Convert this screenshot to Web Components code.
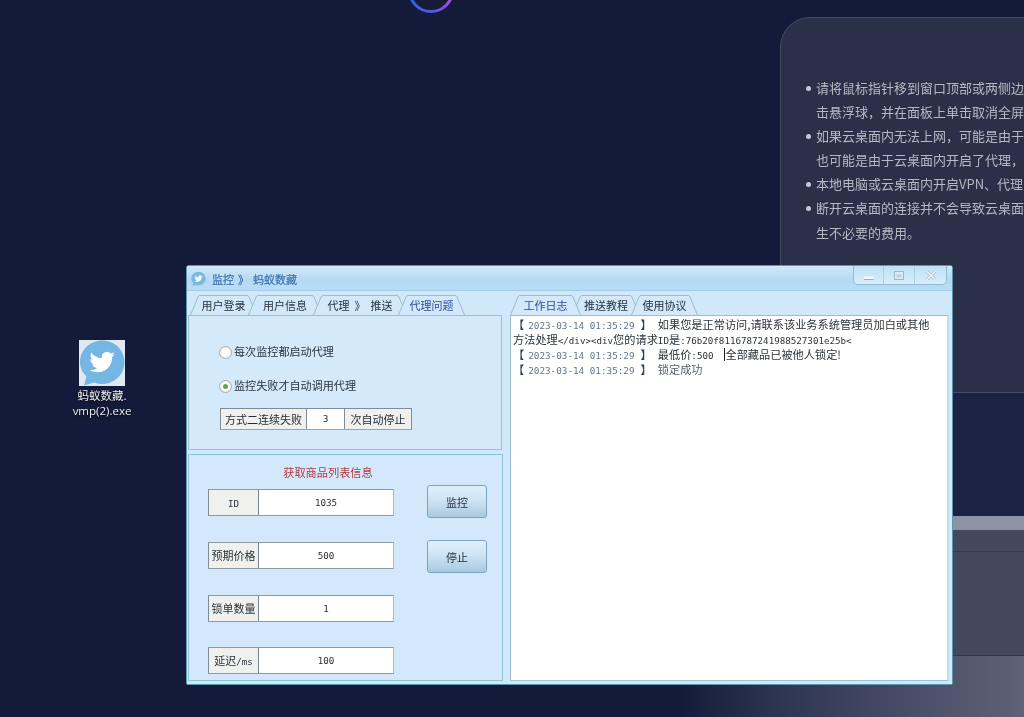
<!DOCTYPE html>
<html lang="zh">
<head>
<meta charset="utf-8">
<title>监控</title>
<style>
  html, body { margin: 0; padding: 0; background: #141b3a; overflow: hidden; }
  body { font-family: "Noto Sans CJK SC", "Liberation Sans", sans-serif; }
</style>
</head>
<body>

<desk-scene>
  <notice-panel slot="backdrop"></notice-panel>
  <desktop-icon slot="icons"></desktop-icon>
  <app-window slot="window">
    <div slot="left-tabs">
      <tab-item w="67">用户登录</tab-item>
      <tab-item w="74">用户信息</tab-item>
      <tab-item w="94">代理&nbsp;&nbsp;》&nbsp;&nbsp;推送</tab-item>
      <tab-item w="67" active>代理问题</tab-item>
    </div>
    <proxy-panel slot="proxy"></proxy-panel>
    <goods-panel slot="goods"></goods-panel>
    <div slot="right-tabs">
      <tab-item w="71" active>工作日志</tab-item>
      <tab-item w="68">推送教程</tab-item>
      <tab-item w="67">使用协议</tab-item>
    </div>
    <log-box slot="log">
      <log-line time="2023-03-14 01:35:29">如果您是正常访问,请联系该业务系统管理员加白或其他</log-line>
      <log-line>方法处理<half-text>&lt;/div&gt;&lt;div</half-text>您的请求<half-text>ID</half-text>是<half-text>:76b20f8116787241988527301e25b&lt;</half-text></log-line>
      <log-line time="2023-03-14 01:35:29">最低价<half-text>:500</half-text><text-caret></text-caret>全部藏品已被他人锁定!</log-line>
      <log-line time="2023-03-14 01:35:29" dim>锁定成功</log-line>
    </log-box>
  </app-window>
</desk-scene>

<script>
// bird used by the desktop icon and the title bar
const BIRD = 'M23.953 4.57a10 10 0 01-2.825.775 4.958 4.958 0 002.163-2.723c-.951.555-2.005.959-3.127 1.184a4.92 4.92 0 00-8.384 4.482C7.69 8.095 4.067 6.13 1.64 3.162a4.822 4.822 0 00-.666 2.475c0 1.71.87 3.213 2.188 4.096a4.904 4.904 0 01-2.228-.616v.06a4.923 4.923 0 003.946 4.827 4.996 4.996 0 01-2.212.085 4.936 4.936 0 004.604 3.417 9.867 9.867 0 01-6.102 2.105c-.39 0-.779-.023-1.17-.067a13.995 13.995 0 007.557 2.209c9.053 0 13.998-7.496 13.998-13.985 0-.21 0-.42-.015-.63A9.935 9.935 0 0024 4.59z';
const MONO = '"DejaVu Sans Mono", "Liberation Mono", monospace';

function shadow(el, html) {
  el.attachShadow({ mode: "open" }).innerHTML = html;
}

class DeskScene extends HTMLElement {
  constructor() {
    super();
    shadow(this, `<style>
      :host { display: block; position: relative; width: 1024px; height: 717px; overflow: hidden;
        background: #141b3a; filter: blur(0.4px); }
      .dark { position: absolute; left: 780px; right: 0; top: 380px; height: 136px; background: #1a2344; }
      .base { position: absolute; left: 640px; right: 0; top: 516px; bottom: 0;
        background: linear-gradient(90deg, #141b3a 0, #141b3a 40px, #2c3350 130px, #474b66 260px, #5f6276 384px); }
      .band { position: absolute; left: 780px; right: 0; top: 516px; height: 14px; background: #8e92a5; }
      .deck { position: absolute; left: 780px; right: 0; top: 530px; height: 125px; background: #43485f;
        border-bottom: 1px solid #33374c; }
      .deck::before { content: ""; position: absolute; left: 0; right: 0; top: 21px; height: 1px; background: #363a50; }
      .ring { position: absolute; left: 405px; top: -36px; }
    </style>
    <div class="dark"></div>
    <div class="base"></div>
    <div class="band"></div>
    <div class="deck"></div>
    <svg class="ring" width="52" height="52" viewBox="0 0 52 52">
      <defs><linearGradient id="g" x1="0" x2="1" y1="0" y2="0">
        <stop offset="0" stop-color="#2f63e6"/><stop offset=".55" stop-color="#5a52e0"/><stop offset="1" stop-color="#a552e4"/>
      </linearGradient></defs>
      <circle cx="26" cy="26" r="21.5" fill="#161b36" stroke="url(#g)" stroke-width="3"/>
    </svg>
    <slot name="backdrop"></slot>
    <slot name="icons"></slot>
    <slot name="window"></slot>`);
  }
}

class NoticePanel extends HTMLElement {
  constructor() {
    super();
    const lines = [
      [1, "请将鼠标指针移到窗口顶部或两侧边"],
      [0, "击悬浮球，并在面板上单击取消全屏"],
      [1, "如果云桌面内无法上网，可能是由于"],
      [0, "也可能是由于云桌面内开启了代理，"],
      [1, "本地电脑或云桌面内开启VPN、代理"],
      [1, "断开云桌面的连接并不会导致云桌面"],
      [0, "生不必要的费用。"]
    ];
    shadow(this, `<style>
      :host { display: block; position: absolute; left: 780px; top: 17px; width: 300px; height: 376px;
        box-sizing: border-box; background: #2a3048; border: 1px solid #454b64; border-radius: 30px;
        padding: 58px 0 0 35px; color: #b6b9c5; font-size: 13px; line-height: 24.100px; overflow: hidden;
        font-family: "Noto Sans CJK SC", "Liberation Sans", sans-serif; }
      div { white-space: nowrap; position: relative; }
      i { position: absolute; left: -10px; top: 10px; width: 5px; height: 5px; border-radius: 50%; background: #c6c9d2; }
    </style>` + lines.map(l => `<div>${l[0] ? "<i></i>" : ""}${l[1]}</div>`).join(""));
  }
}

class DesktopIcon extends HTMLElement {
  constructor() {
    super();
    shadow(this, `<style>
      :host { display: flex; flex-direction: column; align-items: center; position: absolute; left: 66px; top: 340px;
        width: 72px; color: #eef0f4; font-size: 11.500px; line-height: 16px; text-align: center;
        font-family: "Noto Sans CJK SC", "Liberation Sans", sans-serif; text-shadow: 0 1px 2px #000; }
      .tile { width: 46px; height: 46px; background: #dfe9f0; margin-bottom: 1px; }
      .file { font: 11.500px/16px "Open Sans", "Liberation Sans", sans-serif; }
    </style>
    <svg class="tile" viewBox="0 0 46 46">
      <path fill="#76b6e4" d="M23.500 .5C35.500 .5 45.500 10 45.500 22c0 12-10 22-22 22-3 0-5.500-.5-8-1.500L5 45.500l2.500-9C3 32 1 27.500 1 22 1 10 11 .5 23.500 .5z"/>
      <g transform="translate(10.500 9.500) scale(1.050)"><path fill="#fff" d="${BIRD}"/></g>
    </svg>
    <div>蚂蚁数藏.</div>
    <div class="file">vmp(2).exe</div>`);
  }
}

class AppWindow extends HTMLElement {
  constructor() {
    super();
    shadow(this, `<style>
      :host { display: flex; flex-direction: column; position: absolute; left: 186px; top: 265px; width: 767px; height: 420px;
        box-sizing: border-box; border: 1px solid #5b97ad; border-radius: 3px 3px 2px 2px;
        background: #cbe6f8; color: #23303c; font-size: 11px;
        font-family: "Noto Sans CJK SC", "Liberation Sans", sans-serif; }
      .title { flex: none; height: 25px; display: flex; align-items: flex-start; box-sizing: border-box;
        background: linear-gradient(180deg, #cfe8f8 0, #b4daf4 60%, #b9dcf5 100%); border-bottom: 1px solid #a6cbe3; padding-left: 4px; }
      .bird { width: 15px; height: 15px; margin-top: 5px; }
      .title span { margin: 4px 0 0 6px; line-height: 18px; color: #3f74b2; white-space: pre; font-size: 11px;
        -webkit-text-stroke: .25px #3f74b2; text-shadow: 0 0 3px #e3f2fc; }
      .title span i { font-style: normal; margin: 0 4px; }
      .ctl { margin-left: auto; margin-right: 5px; display: flex; height: 19px; box-sizing: border-box;
        border: 1px solid #8fbbd3; border-top: 0; border-radius: 0 0 5px 5px;
        background: linear-gradient(180deg, #bfe0f4, #d8eefb); }
      .ctl b { display: flex; align-items: center; justify-content: center; width: 29px; border-right: 1px solid #a9cfe3; }
      .ctl b:nth-child(2) { width: 30px; }
      .ctl b:last-child { width: 31px; border-right: 0; }
      .main { flex: 1; min-height: 0; display: flex; padding: 4px 3px 3px 1px; gap: 7px; background: #cfe8fa; }
      .left { width: 315px; flex: none; display: flex; flex-direction: column; }
      .right { flex: 1; min-width: 0; display: flex; flex-direction: column; }
      ::slotted([slot="left-tabs"]) { display: flex; height: 20px; padding-left: 2px; flex: none; }
      ::slotted([slot="right-tabs"]) { display: flex; height: 20px; flex: none; }
      ::slotted([slot="goods"]) { flex: 1; margin-top: 4px; }
      ::slotted([slot="log"]) { flex: 1; min-height: 0; }
    </style>
    <div class="title">
      <svg class="bird" viewBox="0 0 24 24">
        <path fill="#7cb9e0" d="M12 1c6.500 0 11.500 4.800 11.500 11 0 6-5 11-11.500 11-1.500 0-3-.3-4.300-.8L2.500 24l1-5C1.500 17 .5 14.700.5 12 .5 5.800 5.500 1 12 1z"/>
        <g transform="translate(5.500 5.800) scale(.54)"><path fill="#fff" d="${BIRD}"/></g>
      </svg>
      <span>监控<i>》</i>蚂蚁数藏</span>
      <div class="ctl">
        <b><svg width="12" height="10"><path d="M1 8h10" stroke="#f2f8fc" stroke-width="3"/><path d="M1 9.500h10" stroke="#8fb2c8"/></svg></b>
        <b><svg width="12" height="11"><rect x="1.500" y="1.500" width="9" height="8" fill="#dcecf6" stroke="#9cb8ca"/><rect x="3.500" y="4" width="5" height="3.500" fill="#bcd6e6"/></svg></b>
        <b><svg width="12" height="11"><path d="M2 1.500l8 8M10 1.500l-8 8" stroke="#a3bccb" stroke-width="3"/><path d="M2 1.500l8 8M10 1.500l-8 8" stroke="#f4f9fc" stroke-width="1.500"/></svg></b>
      </div>
    </div>
    <div class="main">
      <div class="left">
        <slot name="left-tabs"></slot>
        <slot name="proxy"></slot>
        <slot name="goods"></slot>
      </div>
      <div class="right">
        <slot name="right-tabs"></slot>
        <slot name="log"></slot>
      </div>
    </div>`);
  }
}

class TabItem extends HTMLElement {
  constructor() {
    super();
    const w = Number(this.getAttribute("w"));
    const active = this.hasAttribute("active");
    shadow(this, `<style>
      :host { display: flex; align-items: center; justify-content: center; position: relative; height: 20px; flex: none;
        width: ${w}px; margin-left: -9px; white-space: nowrap; font-size: 11px; line-height: 20px;
        color: ${active ? "#2d4c9c" : "#26323d"}; z-index: ${active ? 2 : 1}; }
      :host(:first-child) { margin-left: 0; }
      svg { position: absolute; left: 0; top: 0; z-index: -1; }
      span { position: relative; }
    </style>
    <svg width="${w}" height="20">
      <path d="M0.500 20 L8 2 Q8.500 .5 10 .5 H${w - 10} Q${w - 8.5} .5 ${w - 8} 2 L${w - 0.5} 20" fill="#d3e9fb" stroke="#9dbccd"/>
    </svg>
    <span><slot></slot></span>`);
  }
}

class ProxyPanel extends HTMLElement {
  constructor() {
    super();
    shadow(this, `<style>
      :host { display: block; height: 135px; box-sizing: border-box; flex: none; width: 314px;
        background: #d4e9fa; border: 1px solid #a3bfcd; padding: 26px 0 0 31px; }
      .stop { display: flex; height: 22px; margin-top: 12px; width: 192px; box-sizing: border-box;
        border: 1px solid #7d8c96; border-color: #808d96 #808d96 #95a4ae; font-size: 11px; line-height: 20px; text-align: center; }
      .stop div { background: #f0f0ee; white-space: nowrap; }
      .stop div:nth-child(1) { width: 85px; border-right: 1px solid #7d8c96; }
      .stop div:nth-child(2) { width: 37px; background: #fff; border-right: 1px solid #7d8c96; font-family: ${MONO.replace(/"/g, "'")}; font-size: 9.500px; color: #333; }
      .stop div:nth-child(3) { flex: 1; }
      radio-row + radio-row { margin-top: 14px; }
    </style>
    <radio-row>每次监控都启动代理</radio-row>
    <radio-row checked>监控失败才自动调用代理</radio-row>
    <div class="stop"><div>方式二连续失败</div><div>3</div><div>次自动停止</div></div>`);
  }
}

class RadioRow extends HTMLElement {
  constructor() {
    super();
    shadow(this, `<style>
      :host { display: flex; align-items: center; height: 20px; margin-left: -1px; font-size: 11.100px; color: #2b3540; white-space: nowrap; }
      i { width: 11px; height: 11px; border-radius: 50%; border: 1px solid #a3aeb7; margin-right: 2px; flex: none;
        background: radial-gradient(circle, #ffffff 30%, #e4e9ee 100%); display: flex; align-items: center; justify-content: center; }
      u { width: 5px; height: 5px; border-radius: 50%; background: #6aa257; }
      span { padding-bottom: 2px; }
    </style>
    <i>${this.hasAttribute("checked") ? "<u></u>" : ""}</i><span><slot></slot></span>`);
  }
}

class FormField extends HTMLElement {
  constructor() {
    super();
    shadow(this, `<style>
      :host { display: flex; width: 186px; height: 27px; box-sizing: border-box; border: 1px solid #8c9aa3;
        border-left-color: #7d8c96; border-right-color: #a9bdc9; font-size: 11px; line-height: 25px; text-align: center; color: #2a333b; }
      .k { width: 50px; flex: none; box-sizing: border-box; background: #f0f0ee; border-right: 1px solid #74838d; white-space: nowrap; }
      .v { flex: 1; background: #fff; font: 9.200px/25px ${MONO}; color: #2c2c2c; }
    </style>
    <div class="k"><slot></slot></div>
    <div class="v">${this.getAttribute("value")}</div>`);
  }
}

class GoodsPanel extends HTMLElement {
  constructor() {
    super();
    shadow(this, `<style>
      :host { display: block; box-sizing: border-box; background: #d3e9fb; border: 1px solid #8fc3d0; width: 315px; padding: 9px 0 0 19px; }
      h4 { margin: 0 0 8px; font-weight: 400; font-size: 11.200px; line-height: 17px; width: 240px; text-align: center; color: #b13a46; }
      .grid { display: flex; gap: 33px; }
      .col { display: flex; flex-direction: column; gap: 26px; }
      .btns { display: flex; flex-direction: column; gap: 22px; margin-top: -4px; }
      button { width: 60px; height: 33px; padding: 0; border: 1px solid #7ba5bf; border-radius: 3px; font: inherit; font-size: 11px; color: #26323c;
        background: linear-gradient(180deg, #dff0fb 0, #cfe4f4 45%, #a9c9e0 100%); }
      .last { margin-top: -1px; }
    </style>
    <h4>获取商品列表信息</h4>
    <div class="grid">
      <div class="col">
        <form-field value="1035"><half-text>ID</half-text></form-field>
        <form-field value="500">预期价格</form-field>
        <form-field value="1">锁单数量</form-field>
        <form-field class="last" value="100">延迟<half-text>/ms</half-text></form-field>
      </div>
      <div class="btns"><button>监控</button><button>停止</button></div>
    </div>`);
  }
}

class LogBox extends HTMLElement {
  constructor() {
    super();
    shadow(this, `<style>
      :host { display: block; box-sizing: border-box; background: #fff; border: 1px solid #9dbccd; border-right: 2px solid #bfe0f0;
        border-bottom-color: #9fc3d4; padding: 1px 4px 0 2px; }
    </style><slot></slot>`);
  }
}

class LogLine extends HTMLElement {
  constructor() {
    super();
    const time = this.getAttribute("time");
    shadow(this, `<style>
      :host { display: block; height: 15px; line-height: 15px; font-size: 11.200px; color: ${this.hasAttribute("dim") ? "#55606b" : "#2c333a"}; white-space: nowrap; }
      b { font-weight: 400; color: #2a3f66; }
      .t { font: 9.300px/15px ${MONO}; color: #66768a; padding: 0 6px 0 4px; }
      .gap { display: inline-block; width: 6px; }
    </style>${time ? `<b>【</b><span class="t">${time}</span><b>】</b><span class="gap"></span>` : ""}<slot></slot>`);
  }
}

class HalfText extends HTMLElement {
  constructor() {
    super();
    shadow(this, `<style>
      :host { font: 9.200px/15px ${MONO}; }
    </style><slot></slot>`);
  }
}

class TextCaret extends HTMLElement {
  constructor() {
    super();
    shadow(this, `<style>
      :host { display: inline-block; width: 1px; height: 13px; background: #222; vertical-align: -2px; margin-left: 11px; }
    </style>`);
  }
}

customElements.define("desk-scene", DeskScene);
customElements.define("notice-panel", NoticePanel);
customElements.define("desktop-icon", DesktopIcon);
customElements.define("app-window", AppWindow);
customElements.define("tab-item", TabItem);
customElements.define("proxy-panel", ProxyPanel);
customElements.define("radio-row", RadioRow);
customElements.define("form-field", FormField);
customElements.define("goods-panel", GoodsPanel);
customElements.define("log-box", LogBox);
customElements.define("log-line", LogLine);
customElements.define("half-text", HalfText);
customElements.define("text-caret", TextCaret);
</script>
</body>
</html>
